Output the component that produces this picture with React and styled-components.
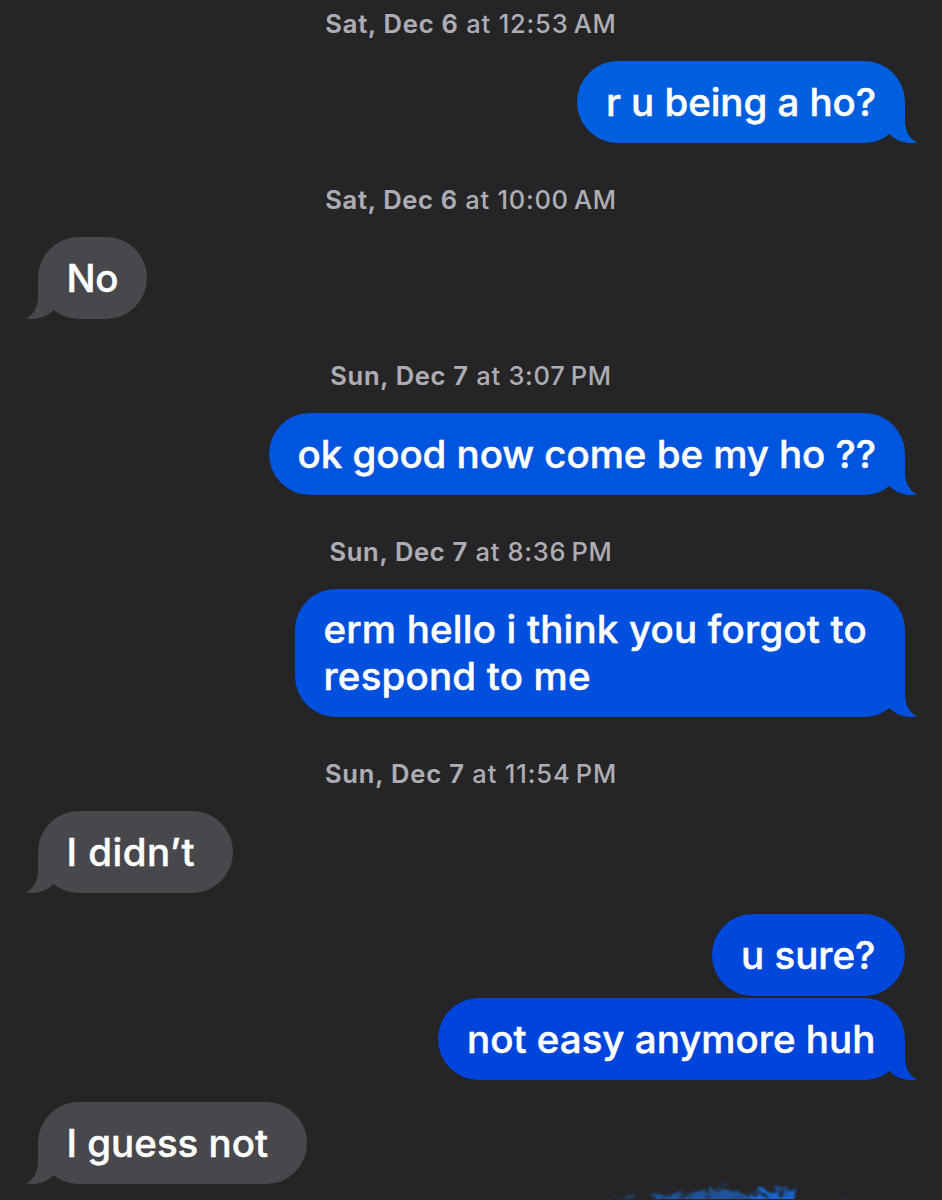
import React from "react";
import styled, { createGlobalStyle } from "styled-components";

const GlobalStyle = createGlobalStyle`
	body {
		margin: 0;
		background-color: #252527;
	}
`;

const Thread = styled.main`
	box-sizing: border-box;
	position: relative;
	display: flex;
	flex-direction: column;
	width: 942px;
	height: 1200px;
	padding: 0 37.5px;
	overflow: hidden;
	background-color: #252527;
	font-family: Inter, "Liberation Sans", sans-serif;
`;

const Stamp = styled.time`
	display: block;
	padding: ${(props) => (props.$first ? "7px" : "40px")} 0 20px;
	color: #aeadb5;
	font-size: 25.5px;
	font-weight: 500;
	line-height: 34px;
	letter-spacing: ${(props) => props.$tracking}px;
	text-align: center;
	white-space: pre;
	b {
		font-weight: 620;
		-webkit-text-stroke: 0.2px currentColor;
	}
`;

const Bubble = styled.div`
	box-sizing: border-box;
	position: relative;
	align-self: ${(props) => (props.$sent ? "flex-end" : "flex-start")};
	width: ${(props) => props.$width}px;
	margin-top: ${(props) => props.$gap || 0}px;
	padding: ${(props) => (props.$tall ? "17px 0 17px" : "18px 0 17px")} 29px;
	border-radius: 41px;
	background-color: ${(props) => props.$tone};
	color: #fff;
	font-size: 38.5px;
	font-weight: 540;
	line-height: 47px;
	letter-spacing: ${(props) => props.$tracking}px;
	white-space: pre;
	-webkit-text-stroke: 0.45px #fff;
`;

const TailShape = styled.svg`
	position: absolute;
	bottom: -1px;
	${(props) => (props.$sent ? "right: -13px;" : "left: -13px; transform: scaleX(-1);")}
	width: 38px;
	height: 44px;
`;

const Scribble = styled.svg`
	position: absolute;
	left: 587px;
	bottom: 1px;
	width: 330px;
	height: 24px;
`;

const Tail = ({ sent, tone }) => (
	<TailShape $sent={sent} viewBox="0 0 38 44" aria-hidden="true">
		<path
			fill={tone}
			d="M5 2H25V20C25 32 30 39 37.3 42.6C27 44.2 17 41.5 10 34.5L5 30Z"
		/>
	</TailShape>
);

const Message = ({ sent, tail = true, tone = "#48474b", children, ...rest }) => (
	<Bubble
		$sent={sent}
		$tone={tone}
		$width={rest.width}
		$gap={rest.gap}
		$tall={rest.tall}
		$tracking={rest.tracking ?? 0}
	>
		{tail && <Tail sent={sent} tone={tone} />}
		{children}
	</Bubble>
);

const DateStamp = ({ day, time, first, tracking = 0.72 }) => (
	<Stamp $first={first} $tracking={tracking}>
		<b>{day}</b> at {time}
	</Stamp>
);

const App = () => {
	return (
		<>
			<GlobalStyle />
			<Thread>
				<DateStamp first day="Sat, Dec 6" time={"12:53\u2009AM"} tracking={0.8} />
				<Message sent width={327.5} tone="#005fde" tracking={-0.05}>
					r u being a ho?
				</Message>
				<DateStamp day="Sat, Dec 6" time={"10:00\u2009AM"} />
				<Message width={109.5} tracking={-0.3}>
					No
				</Message>
				<DateStamp day="Sun, Dec 7" time={"3:07\u2009PM"} />
				<Message sent width={636} tone="#0055de" tracking={-0.05}>
					ok good now come be my ho ??
				</Message>
				<DateStamp day="Sun, Dec 7" time={"8:36\u2009PM"} />
				<Message sent tall width={610} tone="#004fdd" tracking={0.19}>
					{"erm hello i think you forgot to\nrespond to me"}
				</Message>
				<DateStamp day="Sun, Dec 7" time={"11:54\u2009PM"} tracking={0.85} />
				<Message width={195.5} tracking={0.5}>
					I didn’t
				</Message>
				<Message sent tail={false} gap={21} width={192.5} tone="#0048dc">
					u sure?
				</Message>
				<Message sent gap={2} width={466.5} tone="#0045db">
					not easy anymore huh
				</Message>
				<Message gap={22} width={269.5}>
					I guess not
				</Message>
				{/* brush strokes running off the bottom edge */}
				<Scribble viewBox="0 0 330 24" aria-hidden="true">
					<defs>
						<filter id="bristle" x="-5%" y="-60%" width="110%" height="220%">
							<feTurbulence type="fractalNoise" baseFrequency="0.12 0.18" numOctaves="3" seed="7" result="noise" />
							<feDisplacementMap in="SourceGraphic" in2="noise" scale="16" xChannelSelector="R" yChannelSelector="G" result="edge" />
							<feColorMatrix in="noise" type="matrix" values="0 0 0 0 0  0 0 0 0 0  0 0 0 0 0  4 0 0 0 -0.9" result="grain" />
							<feComposite in="edge" in2="grain" operator="in" />
							<feGaussianBlur stdDeviation="1.1" />
						</filter>
					</defs>
					<g filter="url(#bristle)">
						<path
							fill="#1a63c4"
							fillOpacity="0.75"
							d="M62 26L72 19L88 18L104 20L114 15L136 13L150 15L161 19L174 14L184 18L194 14L208 13L206 40H62Z"
						/>
						<path fill="#1768d6" d="M166 18L180 15L184 20L198 15L208 14L207 40H164Z" />
						<path fill="#1d5099" fillOpacity="0.5" d="M26 24L44 18L52 27H30Z" />
						<path fill="#1d5099" fillOpacity="0.4" d="M252 26L260 22L270 27Z" />
					</g>
				</Scribble>
			</Thread>
		</>
	);
};

export default App;
